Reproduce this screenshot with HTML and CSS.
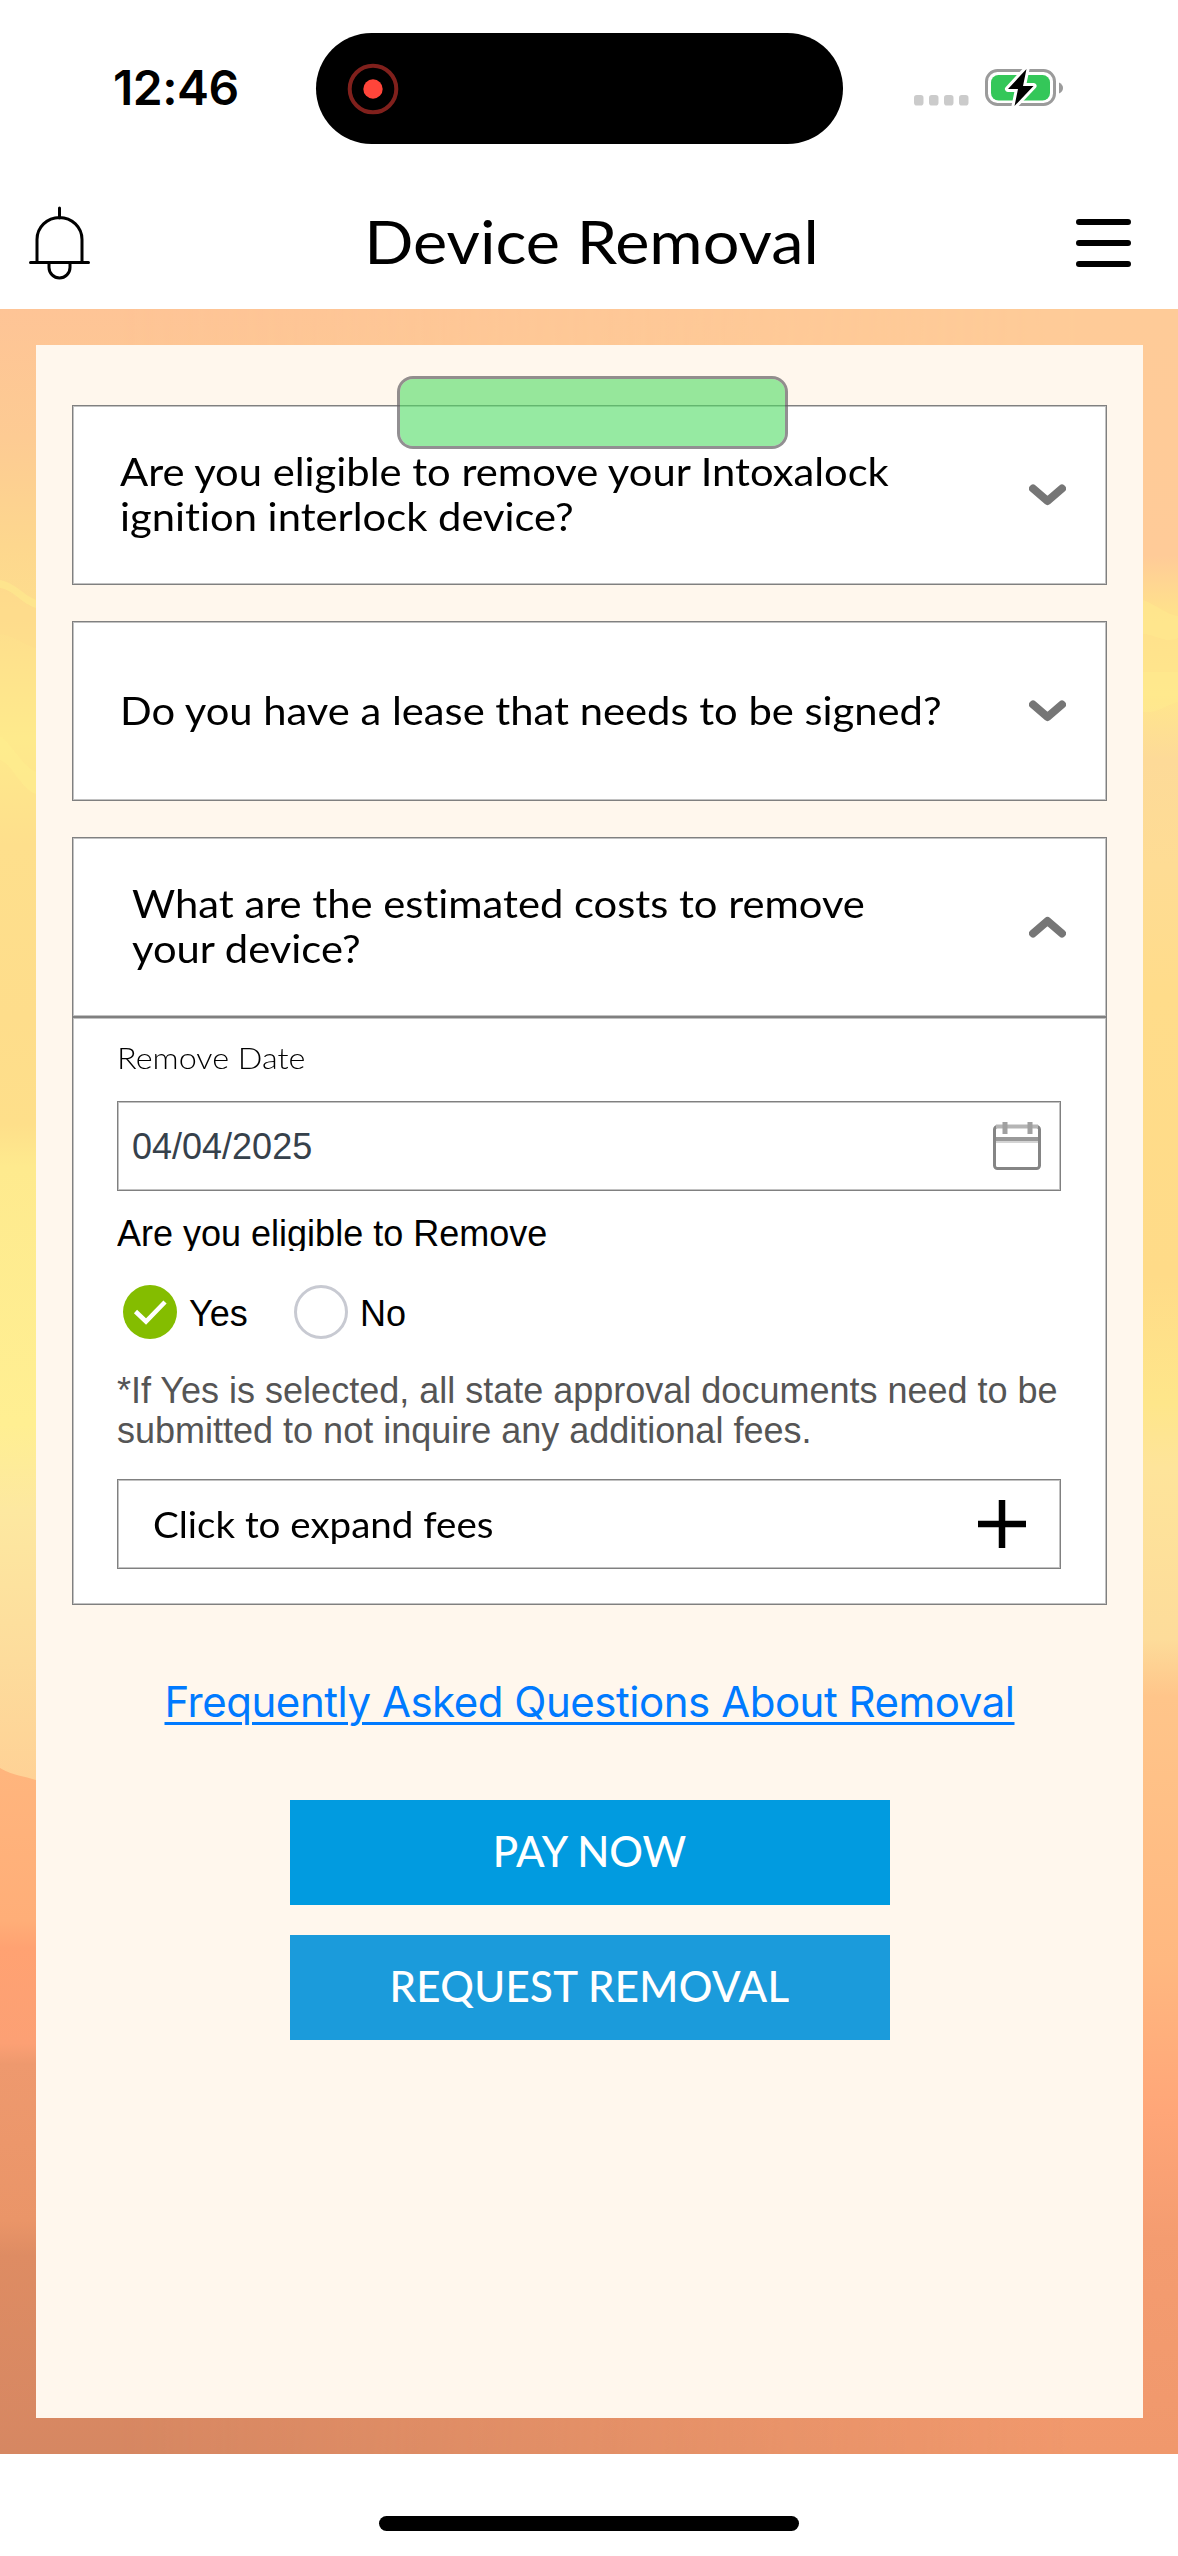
FILE: index.html
```
<!DOCTYPE html>
<html lang="en">
<head>
<meta charset="utf-8">
<title>Device Removal</title>
<link rel="stylesheet" href="styles.css">
</head>
<body>
<div class="screen">
  <div class="status-bar">
    <span class="time">12:46</span>
    <div class="island">
      <svg width="52" height="52" viewBox="0 0 52 52"><circle cx="26" cy="26" r="23.3" fill="none" stroke="#80201c" stroke-width="4"/><circle cx="26" cy="26" r="9.7" fill="#ff453a"/></svg>
    </div>
    <svg class="signal" width="55" height="11" viewBox="0 0 55 11" fill="#cbcbcb"><rect width="9.5" height="10.5" rx="2.8"/><rect x="15" width="9.5" height="10.5" rx="2.8"/><rect x="30" width="9.5" height="10.5" rx="2.8"/><rect x="45" width="9.5" height="10.5" rx="2.8"/></svg>
    <svg class="battery" width="79" height="40" viewBox="0 0 79 40">
      <rect x="1.5" y="2.5" width="68" height="34" rx="11" fill="none" stroke="#9b9b9b" stroke-width="3"/>
      <path d="M74 14.5q4 2 4 5.500t-4 5.500z" fill="#9b9b9b"/>
      <rect x="6" y="7" width="59" height="25.500" rx="7.500" fill="#34c759"/>
      <path d="M41.500 1 23 21h10l-3.500 17L48.500 18H38z" fill="#000" stroke="#fff" stroke-width="6" stroke-linejoin="round" paint-order="stroke"/>
    </svg>
  </div>

  <header class="header">
    <svg width="61" height="74" viewBox="0 0 61 74" fill="none" stroke="#000" stroke-width="3" stroke-linecap="round">
      <path d="M30.500 2v10M8 55V33.500a22.500 22 0 0 1 45 0V55M1.500 56.500h58M20 57.500v4a10.500 10.500 0 0 0 21 0v-4"/>
    </svg>
    <h1 class="title">Device Removal</h1>
    <svg width="55" height="50" viewBox="0 0 55 50" stroke="#000" stroke-width="6" stroke-linecap="round"><path d="M3 4h49M3 25h49M3 46h49"/></svg>
  </header>

  <main class="main">
    <svg class="sky" width="1178" height="2145" viewBox="0 309 1178 2145" preserveAspectRatio="none">
      <defs>
        <linearGradient id="west" gradientUnits="userSpaceOnUse" x1="0" y1="309" x2="0" y2="2454">
          <stop offset="0" stop-color="#fec496"/><stop offset=".06" stop-color="#fdcb93"/><stop offset=".11" stop-color="#fdd78e"/>
          <stop offset=".16" stop-color="#fee18c"/><stop offset=".2" stop-color="#feea8c"/><stop offset=".25" stop-color="#fedf8c"/>
          <stop offset=".33" stop-color="#fedd8b"/><stop offset=".38" stop-color="#fedf8a"/><stop offset=".4" stop-color="#feea8e"/>
          <stop offset=".52" stop-color="#ffef92"/><stop offset=".56" stop-color="#fde8a0"/><stop offset=".63" stop-color="#fddc9c"/>
          <stop offset=".7" stop-color="#ffcf94"/><stop offset="1" stop-color="#ffcf94"/>
        </linearGradient>
        <linearGradient id="east" gradientUnits="userSpaceOnUse" x1="0" y1="309" x2="0" y2="2454">
          <stop offset="0" stop-color="#fecb98"/><stop offset=".115" stop-color="#ffcb98"/><stop offset=".14" stop-color="#ffe08c"/>
          <stop offset=".18" stop-color="#ffe68c"/><stop offset=".21" stop-color="#fdda98"/><stop offset=".26" stop-color="#fedc94"/>
          <stop offset=".32" stop-color="#ffdc8a"/><stop offset=".45" stop-color="#ffdb88"/><stop offset=".51" stop-color="#fee68a"/>
          <stop offset=".54" stop-color="#fee49a"/><stop offset=".62" stop-color="#fddc9a"/><stop offset=".647" stop-color="#ffc58a"/>
          <stop offset=".77" stop-color="#ffb880"/><stop offset=".84" stop-color="#ffa678"/><stop offset=".9" stop-color="#f49c70"/>
          <stop offset="1" stop-color="#f0986c"/>
        </linearGradient>
        <linearGradient id="fade" x1="0" y1="0" x2="1" y2="0"><stop offset=".1" stop-color="#000"/><stop offset=".92" stop-color="#fff"/></linearGradient>
        <mask id="east-mask" maskUnits="userSpaceOnUse" x="0" y="309" width="1178" height="2145"><rect y="309" width="1178" height="2145" fill="url(#fade)"/></mask>
        <linearGradient id="hills" gradientUnits="userSpaceOnUse" x1="0" y1="1770" x2="0" y2="2454">
          <stop offset="0" stop-color="#ffb57d"/><stop offset=".22" stop-color="#ffae78"/><stop offset=".26" stop-color="#ffa272"/>
          <stop offset=".4" stop-color="#fca074"/><stop offset=".43" stop-color="#ee996e"/><stop offset=".66" stop-color="#ea9568"/>
          <stop offset=".71" stop-color="#de8c63"/><stop offset="1" stop-color="#d68762"/>
        </linearGradient>
      </defs>
      <rect y="309" width="1178" height="2145" fill="url(#west)"/>
      <path d="M0 588c14 4 22 16 36 20v40c-14-4-20-12-36-14z" fill="#ffd98c" opacity=".35"/>
      <path d="M0 588c14 2 22 16 36 20v-8c-14-6-22-18-36-20zM0 760c12 4 22 30 36 34v-22C22 766 12 744 0 736z" fill="#fff08e" opacity=".45"/>
      <path d="M0 1768c14 8 24 8 36 12l1142 180v494H0z" fill="url(#hills)"/>
      <rect y="309" width="1178" height="2145" fill="url(#east)" mask="url(#east-mask)"/>
      <path d="M1143 600c12 4 22 14 35 16v22c-12 6-24-4-35-4zM1143 672h35v30c-14 4-22 12-35 10z" fill="#ffee8e" opacity=".4"/>
    </svg>

    <section class="panel">
      <article class="card question">
        <p class="question-text">Are you eligible to remove your Intoxalock<br>ignition interlock device?</p>
        <svg class="chevron" width="37" height="22" viewBox="0 0 37 22"><path d="M4 4.500 18.500 17 33 4.500"/></svg>
      </article>
      <article class="card question">
        <p class="question-text">Do you have a lease that needs to be signed?</p>
        <svg class="chevron" width="37" height="22" viewBox="0 0 37 22"><path d="M4 4.500 18.500 17 33 4.500"/></svg>
      </article>
      <article class="open-group">
        <div class="card question question-open">
          <p class="question-text">What are the estimated costs to remove<br>your device?</p>
          <svg class="chevron" width="37" height="22" viewBox="0 0 37 22"><path d="M4 17.500 18.500 5 33 17.500"/></svg>
        </div>
        <div class="card details">
          <div class="label">Remove Date</div>
          <div class="card date-field">
            <span>04/04/2025</span>
            <svg width="48" height="48" viewBox="0 0 48 48" fill="none">
              <rect x="1.500" y="4.500" width="45" height="42" rx="3" stroke="#858585" stroke-width="3"/>
              <path d="M3 4.500h42" stroke="#b5b5b5" stroke-width="4"/><path d="M3 17h42" stroke="#999" stroke-width="4"/><path d="M3 20h42" stroke="#d4d4d4" stroke-width="2"/>
              <path d="M12 0v12M37 0v12" stroke="#a0a0a0" stroke-width="5"/>
            </svg>
          </div>
          <div class="eligible">Are you eligible to Remove</div>
          <div class="options">
            <div class="option">
              <svg width="54" height="54" viewBox="0 0 54 54"><circle cx="27" cy="27" r="27" fill="#84bd00"/><path d="M12.500 26.500 23 36.500 42 17" fill="none" stroke="#fff" stroke-width="4.500"/></svg>
              <span>Yes</span>
            </div>
            <div class="option">
              <svg width="54" height="54" viewBox="0 0 54 54"><circle cx="27" cy="27" r="25.500" fill="#fff" stroke="#c8cad2" stroke-width="3"/></svg>
              <span>No</span>
            </div>
          </div>
          <p class="note">*If Yes is selected, all state approval documents need to be<br>submitted to not inquire any additional fees.</p>
          <div class="card fees">
            <span>Click to expand fees</span>
            <svg width="48" height="48" viewBox="0 0 48 48" stroke="#000" stroke-width="6.500"><path d="M24 0v48M0 24h48"/></svg>
          </div>
        </div>
      </article>

      <a class="faq-link">Frequently Asked Questions About Removal</a>
      <div class="button pay">PAY NOW</div>
      <div class="button request">REQUEST REMOVAL</div>
      <div class="highlight"></div>
    </section>
  </main>

  <footer class="footer"><div class="home-indicator"></div></footer>
</div>
</body>
</html>
```
FILE: styles.css
```
* { box-sizing: border-box; }
body { margin: 0; background: #fff; color: #000; }
h1, p { margin: 0; font-weight: 400; }
svg { display: block; flex: none; }

.screen { width: 1178px; height: 2556px; display: flex; flex-direction: column; overflow: hidden; }

/* Status bar */
.status-bar { height: 177px; display: flex; align-items: center; padding-left: 113px; }
.time { width: 203px; font: 600 48px/60px Inter, sans-serif; letter-spacing: -0.5px; padding-bottom: 2px; }
.island { width: 527px; height: 111px; border-radius: 56px; background: #000; display: flex; align-items: center; padding-left: 31px; }
.signal { margin: 23px 0 0 71px; }
.battery { margin: -2px 0 0 16px; }

/* Header */
.header { height: 132px; display: flex; align-items: center; justify-content: space-between; padding: 0 47px 0 29px; }
.title { margin-left: 16px; font: 400 60px/72px Lato, sans-serif; padding-bottom: 4px; transform: scaleX(1.08); }

/* Content */
.main { position: relative; height: 2145px; padding: 36px 35px 36px 36px; }
.sky { position: absolute; inset: 0; }
.panel { position: relative; height: 2073px; padding: 60px 36px 0; background: #fff7ed; display: flex; flex-direction: column; }
.card { background: #fff; border: 1px solid #808080; box-shadow: inset 0 0 0 1px #c2c2c2; }
.question { height: 180px; margin-bottom: 36px; padding: 0 40px 0 47px; display: flex; align-items: center; justify-content: space-between; }
.question-text { font: 400 39px/45px Lato, sans-serif; padding-bottom: 2px; font-variant-ligatures: none; transform: scaleX(1.07); transform-origin: left; }
.chevron { fill: none; stroke: #767676; stroke-width: 8; stroke-linecap: round; stroke-linejoin: round; }
.question-open { margin: 0; padding-left: 59px; }

.details { height: 588px; padding: 21px 45px 0 44px; }
.label { height: 36px; margin-bottom: 26px; font: 300 30px/36px Lato, sans-serif; transform: scaleX(1.08); transform-origin: left; }
.date-field { height: 90px; padding: 0 19px 0 14px; display: flex; align-items: center; justify-content: space-between; color: #36414b; font: 36px/42px "Liberation Sans", Arial, sans-serif; }
.date-field span { padding-top: 2px; }
.eligible { height: 37px; margin-top: 23px; overflow: hidden; font: 36px/40px "Liberation Sans", Arial, sans-serif; }
.options { margin-top: 34px; padding-left: 6px; display: flex; font: 36px/54px "Liberation Sans", Arial, sans-serif; }
.option { width: 171px; height: 54px; display: flex; gap: 12px; }
.option span { padding-top: 2px; }
.note { margin-top: 32px; color: #555; font: 36px/40px "Liberation Sans", Arial, sans-serif; white-space: nowrap; }
.fees { height: 90px; margin-top: 28px; padding: 0 34px 0 35px; display: flex; align-items: center; justify-content: space-between; font: 36px/42px Lato, sans-serif; }
.fees span { padding-bottom: 1px; transform: scaleX(1.07); transform-origin: left; }

.faq-link { align-self: center; margin: 72px 0 73px; color: #007aff; font: 42px/50px Inter, sans-serif; letter-spacing: -0.47px; white-space: nowrap; text-decoration: underline; text-decoration-thickness: 3px; text-underline-offset: 5px; }
.button { align-self: center; width: 600px; height: 105px; margin-bottom: 30px; padding-bottom: 3px; display: flex; align-items: center; justify-content: center; color: #fff; font: 500 42px/50px Lato, sans-serif; }
.pay { background: #019be0; }
.request { background: #1b9bdb; letter-spacing: 0.3px; }

/* Translucent marker laid over the first card */
.highlight { position: absolute; left: 361px; top: 31px; width: 391px; height: 73px; border: 3px solid rgba(100, 95, 100, 0.7); border-radius: 16px; background: rgba(80, 220, 100, 0.6); background-clip: padding-box; }

.footer { flex: 1; display: flex; justify-content: center; align-items: flex-start; padding-top: 62px; }
.home-indicator { width: 420px; height: 15px; border-radius: 8px; background: #000; }
```
